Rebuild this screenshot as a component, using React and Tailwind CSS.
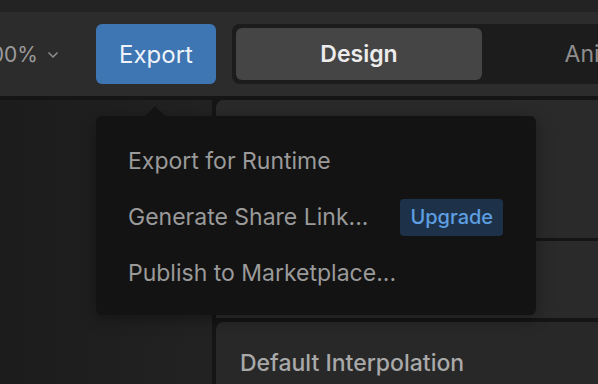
import React from "react";
import { ChevronDown } from "lucide-react";

const font = { fontFamily: "Inter, 'Noto Sans', sans-serif" };

const MenuItem = ({ label, badge }) => (
    <div className="flex items-center h-14 px-8 gap-8 whitespace-nowrap">
        <span className="text-[23px] text-[#9a9a9a]">{label}</span>
        {badge && (
            <span className="h-[37px] px-[10px] shrink-0 flex items-center rounded bg-[#1d3248] text-[#5d9fe2] text-[20px] font-medium">
                {badge}
            </span>
        )}
    </div>
);

export default function App() {
    return (
        <div style={font} className="relative w-[598px] h-[384px] overflow-hidden bg-[#1e1e1e] flex flex-col">
            {/* top strip */}
            <div className="h-3 bg-[#232323]" />

            {/* toolbar */}
            <div className="h-[84px] bg-[#2c2c2c] flex items-center">
                <div className="flex items-center justify-end w-[96px] pr-[35px] pt-px text-[#9b9b9b] shrink-0">
                    <span className="text-[21px] whitespace-nowrap">100%</span>
                    <ChevronDown size={16} strokeWidth={2.5} className="ml-[7px] shrink-0 text-[#8a8a8a]" />
                </div>
                <button className="w-[120px] h-[60px] shrink-0 rounded-md bg-[#3e75b3] text-[#eef3f9] text-[24px] pt-px">
                    Export
                </button>
                <div className="ml-4 h-[60px] flex-1 rounded-l-lg bg-[#1c1c1c] p-1 flex gap-1 min-w-0">
                    <div className="w-[246px] shrink-0 rounded-md bg-[#454545] flex items-center justify-center pt-px text-[23px] font-semibold text-[#ececec]">
                        Design
                    </div>
                    <div className="w-[246px] shrink-0 flex items-center justify-center pt-px text-[23px] text-[#8e8e8e]">
                        Animate
                    </div>
                </div>
            </div>
            <div className="h-1 bg-[#151515]" />

            {/* main area */}
            <div className="flex-1 flex min-h-0">
                <div className="w-[212px] bg-gradient-to-r from-[#1c1c1c] to-[#222222]" />
                <div className="w-1 bg-[#151515]" />
                <div className="flex-1 flex flex-col bg-[#151515]">
                    <div className="h-[138px] rounded-tl-lg bg-[#2a2a2a]" />
                    <div className="h-[3px]" />
                    <div className="h-[77px] bg-[#2a2a2a]" />
                    <div className="h-1" />
                    <div className="flex-1 rounded-tl-lg bg-[#282828] px-6 pt-[24px]">
                        <span className="text-[23px] font-medium text-[#a9a9a9] whitespace-nowrap">Default Interpolation</span>
                    </div>
                </div>
            </div>

            {/* export menu */}
            <div className="absolute left-[96px] top-[116px] w-[440px]">
                <div className="absolute -top-[10px] left-[49px] w-0 h-0 border-l-[10px] border-r-[10px] border-b-[10px] border-l-transparent border-r-transparent border-b-[#131313]" />
                <div className="rounded-md bg-[#131313] pt-[17px] pb-[14px] shadow-[0_4px_16px_rgba(0,0,0,0.35)]">
                    <MenuItem label="Export for Runtime" />
                    <MenuItem label="Generate Share Link..." badge="Upgrade" />
                    <MenuItem label="Publish to Marketplace..." />
                </div>
            </div>
        </div>
    );
}
